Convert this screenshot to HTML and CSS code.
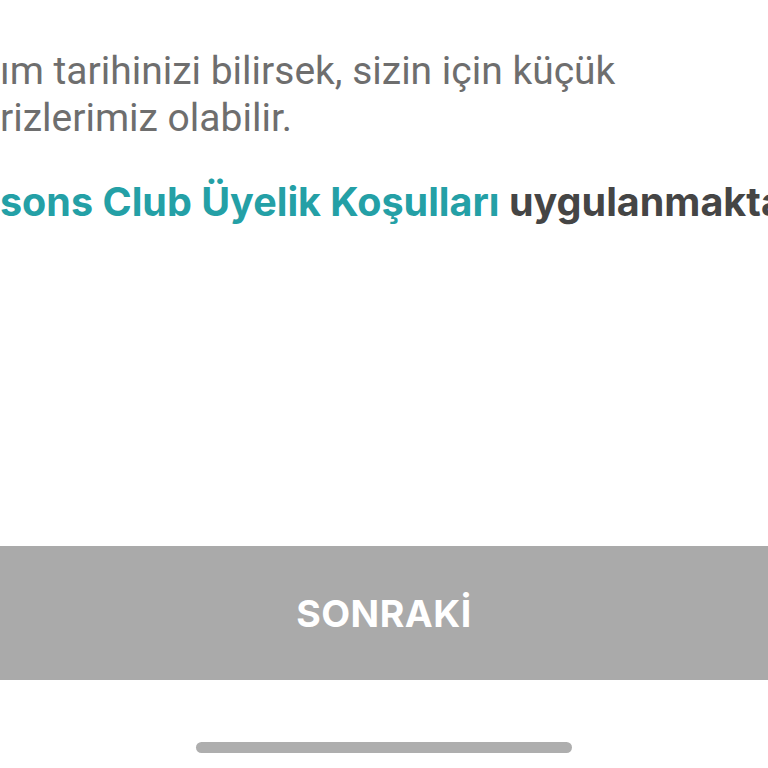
FILE: index.html
```html
<!DOCTYPE html>
<html lang="tr">
<head>
<meta charset="utf-8">
<link rel="stylesheet" href="styles.css">
</head>
<body>
<div class="screen">
  <div class="content">
    <p class="intro">ım tarihinizi bilirsek, sizin için küçük<br>rizlerimiz olabilir.</p>
    <p class="terms"><span class="link">sons Club Üyelik Koşulları</span> uygulanmakta</p>
  </div>
  <button class="next">SONRAKİ</button>
  <div class="home-bar"><span class="indicator"></span></div>
</div>
</body>
</html>
```
FILE: styles.css
```css
html, body {
  margin: 0;
  padding: 0;
  background: #ffffff;
}
.screen {
  width: 768px;
  height: 768px;
  overflow: hidden;
  display: flex;
  flex-direction: column;
}
.content {
  flex: 1;
  padding-top: 48px;
}
.intro {
  margin: 0;
  font-family: Roboto, "Liberation Sans", sans-serif;
  font-size: 39px;
  line-height: 47px;
  color: #6e6e6e;
  white-space: nowrap;
}
.terms {
  margin: 35px 0 0;
  font-family: Inter, "Open Sans", sans-serif;
  font-weight: 650;
  font-size: 39.5px;
  line-height: 50px;
  color: #454545;
  white-space: nowrap;
}
.link {
  color: #24a0a6;
}
.next {
  border: none;
  margin: 0;
  width: 768px;
  height: 134px;
  flex: none;
  background: #aaaaaa;
  color: #ffffff;
  font-family: Inter, "Open Sans", sans-serif;
  font-weight: 700;
  font-size: 37.5px;
  letter-spacing: 0.5px;
}
.home-bar {
  height: 88px;
  flex: none;
  display: flex;
  justify-content: center;
  padding-top: 62px;
  box-sizing: border-box;
}
.indicator {
  width: 376px;
  height: 11px;
  border-radius: 6px;
  background: #aeaeae;
}
```
